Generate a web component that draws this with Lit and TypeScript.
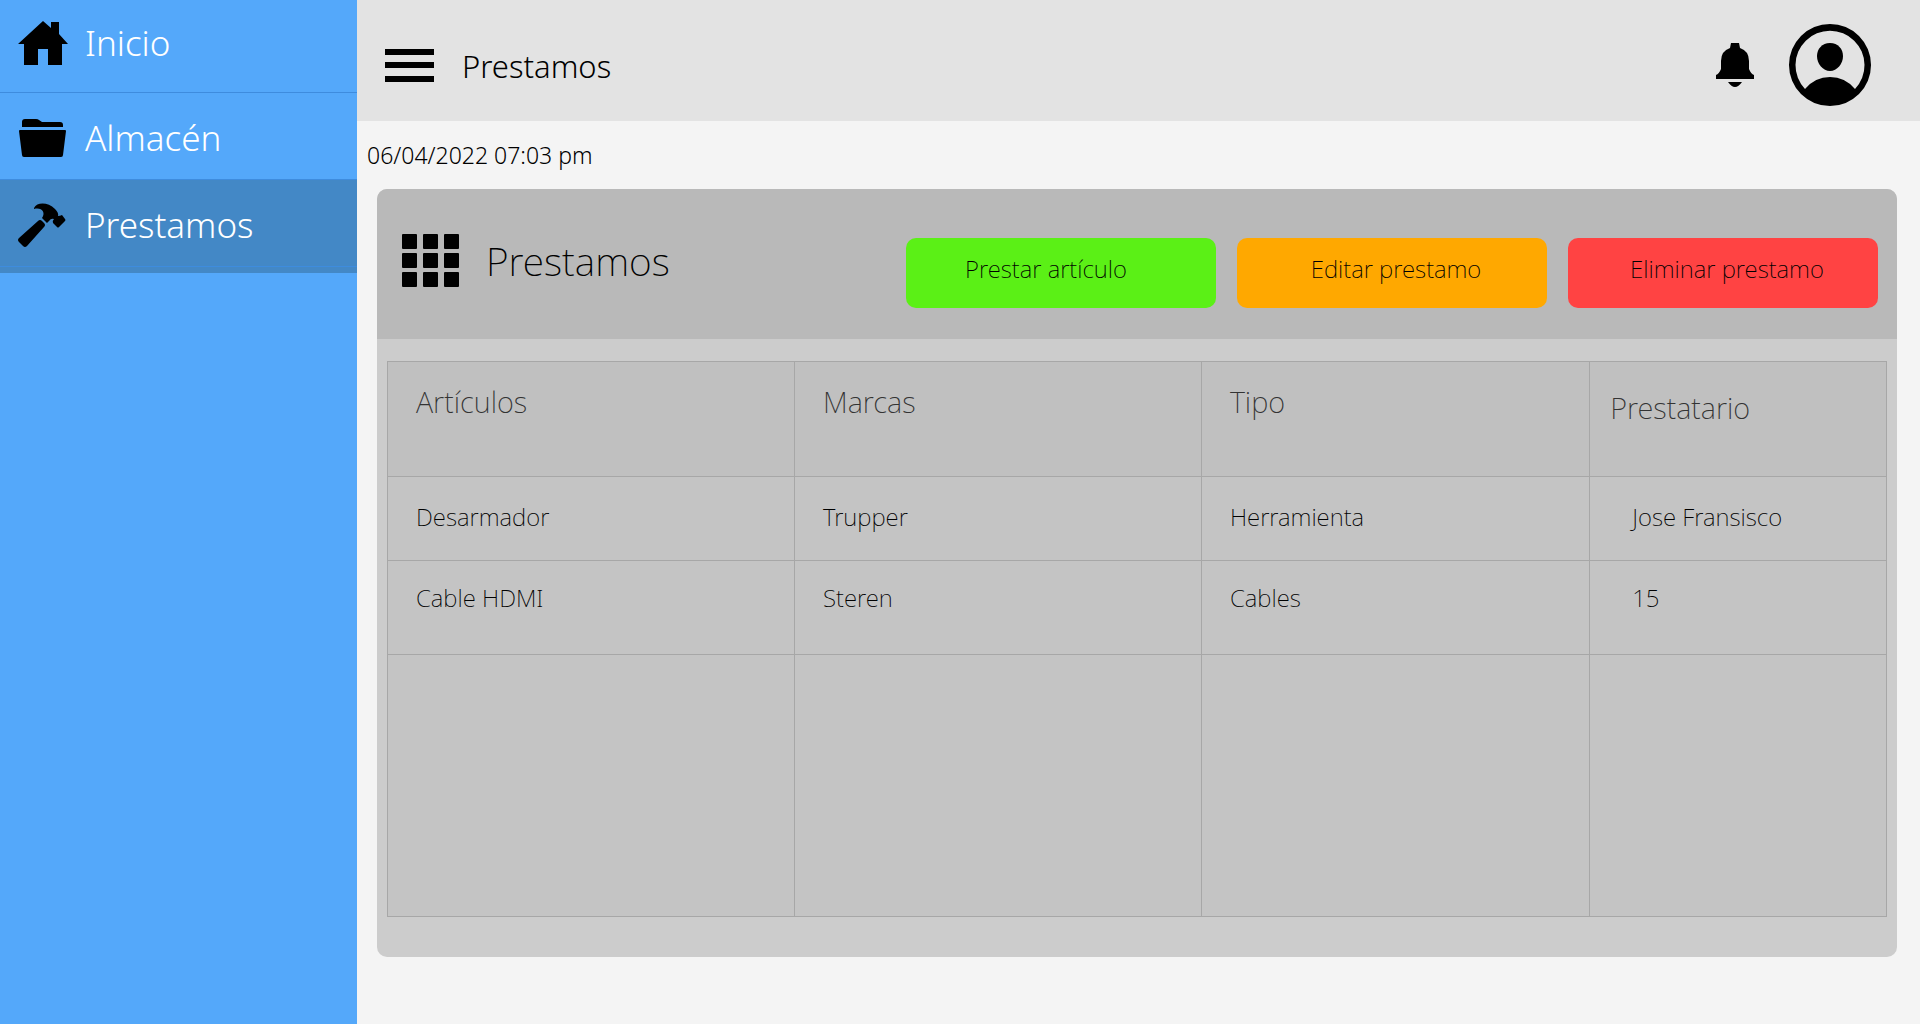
import { LitElement, html, css, svg } from "lit";
import { customElement, state } from "lit/decorators.js";
import { classMap } from "lit/directives/class-map.js";

const homeIcon = svg`<svg class="icon" viewBox="0 0 48 44" width="48" height="44" aria-hidden="true">
  <path d="M24 0 L32 7 V1 H40 V13 L49 23 H43 V44 H29 V28 H19 V44 H5 V23 H-1 Z" /></svg>`;

const folderIcon = svg`<svg class="icon" viewBox="0 0 48 38" width="48" height="38" aria-hidden="true">
  <path d="M3 8 V3 Q3 0 6 0 H17 Q19 0 20 1 L23 3 H41 Q44 3 44 6 V8 Z M1 11 H46 Q47 11 47 12 L44 36 Q44 38 42 38 H5 Q3 38 3 36 L0 12 Q0 11 1 11 Z" /></svg>`;

const hammerIcon = svg`<svg class="icon" viewBox="0 0 48 44" width="48" height="44" aria-hidden="true">
  <path d="M15 5 C18 -1 29 -1 36 6 Q40 10 39 13 Q41 13 43 12 L46 16 Q47 17 46 18 L40 24 Q39 25 38 24 L34 20 Q33 18 35 16 Q32 15 30 18 L28 20 L23 15 C27 10 23 4 15 6 Z" />
  <path d="M19 18 Q21 16 23 18 L25 20 Q27 22 25 24 L8 43 Q6 45 4 43 L0 39 Q-2 37 0 35 Z" /></svg>`;

interface Section {
  id: string;
  label: string;
  icon: unknown;
}

const SECTIONS: Section[] = [
  { id: "inicio", label: "Inicio", icon: homeIcon },
  { id: "almacen", label: "Almacén", icon: folderIcon },
  { id: "prestamos", label: "Prestamos", icon: hammerIcon },
];

const ACTIONS = [
  { kind: "lend", label: "Prestar artículo" },
  { kind: "edit", label: "Editar prestamo" },
  { kind: "remove", label: "Eliminar prestamo" },
];

const COLUMNS = ["Artículos", "Marcas", "Tipo", "Prestatario"];

const LOANS = [
  ["Desarmador", "Trupper", "Herramienta", "Jose Fransisco"],
  ["Cable HDMI", "Steren", "Cables", "15"],
];

@customElement("app-root")
export class AppRoot extends LitElement {
  @state() private current = "prestamos";

  static styles = css`
    :host {
      display: flex;
      min-height: 100vh;
      background: #f4f4f4;
      color: #000;
      font-family: "Noto Sans", "Open Sans", sans-serif;
      font-weight: 200;
    }
    * {
      box-sizing: border-box;
    }
    svg {
      display: block;
      flex: none;
      overflow: visible;
      fill: currentColor;
    }
    button {
      border: 0;
      padding: 0;
      background: none;
      color: inherit;
      font: inherit;
      cursor: pointer;
    }
    h1,
    h2,
    p {
      margin: 0;
      font-weight: inherit;
    }

    .sidebar {
      flex: none;
      width: 357px;
      background: #54a8fa;
    }
    .menu {
      margin: 0;
      padding: 0;
      list-style: none;
    }
    .item.active {
      padding-bottom: 6px;
      background: #4388c6;
    }
    .link {
      display: flex;
      align-items: center;
      gap: 18px;
      padding: 21px 19px 17px;
      border-bottom: 1px solid #3e8cde;
      color: #fff;
      font-size: 35px;
      font-weight: 300;
      line-height: 48px;
      text-decoration: none;
    }
    .item:first-child .link {
      padding-top: 19px;
      padding-bottom: 25px;
    }
    .icon {
      color: #000;
    }

    .content {
      flex: 1;
      min-width: 0;
    }
    .topbar {
      display: flex;
      align-items: center;
      gap: 28px;
      padding: 24px 49px 15px 28px;
      background: #e3e3e3;
    }
    .topbar h1 {
      flex: 1;
      padding-top: 2px;
      font-size: 31px;
      font-weight: 300;
      line-height: 40px;
    }
    .tools {
      display: flex;
      align-items: center;
      gap: 35px;
    }
    .date {
      padding: 18px 10px;
      font-size: 23px;
      font-weight: 300;
      line-height: 32px;
    }

    .card {
      margin: 0 23px 67px 20px;
      border-radius: 10px;
      overflow: hidden;
      background: #ccc;
    }
    .card-head {
      display: flex;
      align-items: center;
      justify-content: space-between;
      gap: 21px;
      padding: 45px 19px 28px 25px;
      background: #b9b9b9;
    }
    .title {
      display: flex;
      align-items: center;
      gap: 27px;
      padding-bottom: 24px;
      font-size: 39px;
      line-height: 46px;
    }
    .actions {
      display: flex;
      gap: 21px;
    }
    .action {
      width: 310px;
      height: 70px;
      padding: 0 0 8px 8px;
      border-radius: 10px;
      font-size: 24px;
      line-height: 32px;
    }
    .lend {
      padding: 0 30px 8px 0;
      background: #5bf016;
    }
    .edit {
      background: #ffa800;
    }
    .remove {
      background: #ff4343;
    }

    .card-body {
      padding: 22px 10px 40px;
    }
    table {
      width: 100%;
      table-layout: fixed;
      border-collapse: collapse;
    }
    th,
    td {
      border: 1px solid #a7a7a7;
      padding: 24px 8px 0 28px;
      font-weight: 200;
      text-align: left;
      vertical-align: top;
    }
    th {
      height: 115px;
      padding-top: 20px;
      background: #c0c0c0;
      color: #333;
      font-size: 29px;
      line-height: 40px;
    }
    th:last-child {
      padding: 26px 8px 0 20px;
    }
    td {
      height: 84px;
      background: #c4c4c4;
      font-size: 24px;
      line-height: 32px;
    }
    td:last-child {
      padding-left: 42px;
    }
    tr:nth-child(2) td {
      height: 94px;
      padding-top: 21px;
    }
    tr.blank td {
      height: 262px;
    }
    .wide {
      width: 27.15%;
    }
    .medium {
      width: 25.9%;
    }
  `;

  private select(event: Event, id: string) {
    event.preventDefault();
    this.current = id;
  }

  private renderSidebar() {
    return html`<nav class="sidebar" aria-label="Principal">
      <ul class="menu">
        ${SECTIONS.map(
          (s) => html`<li class=${classMap({ item: true, active: s.id === this.current })}>
            <a class="link" href="#${s.id}" @click=${(e: Event) => this.select(e, s.id)}>${s.icon}<span>${s.label}</span></a>
          </li>`
        )}
      </ul>
    </nav>`;
  }

  private renderTopbar() {
    return html`<header class="topbar">
      <button aria-label="Menú">
        <svg viewBox="0 0 49 33" width="49" height="33"><path d="M0 0h49v6H0zM0 13h49v6H0zM0 27h49v6H0z" /></svg>
      </button>
      <h1>Prestamos</h1>
      <div class="tools">
        <button aria-label="Notificaciones">
          <svg viewBox="0 0 38 44" width="38" height="44">
            <path d="M15 0 H23 L24 5 Q33 8 33 18 V26 Q35 31 38 32 V36 H0 V32 Q3 31 5 26 V18 Q5 8 14 5 Z M12 39 H26 Q19 49 12 39 Z" />
          </svg>
        </button>
        <button aria-label="Perfil">
          <svg viewBox="0 0 82 82" width="82" height="82">
            <path fill-rule="evenodd" d="M41 0 A41 41 0 1 1 41 82 A41 41 0 1 1 41 0 Z M16 65 Q26 53 41 53 Q56 53 66 65 A34.5 34.5 0 1 0 16 65 Z" />
            <path d="M41 19 C49 19 54 25 54 32 C54 40 48 47 41 47 C34 47 28 40 28 32 C28 25 33 19 41 19 Z" />
          </svg>
        </button>
      </div>
    </header>`;
  }

  private renderTable() {
    return html`<table>
      <colgroup>
        <col class="wide" />
        <col class="wide" />
        <col class="medium" />
        <col />
      </colgroup>
      <thead>
        <tr>${COLUMNS.map((c) => html`<th scope="col">${c}</th>`)}</tr>
      </thead>
      <tbody>
        ${LOANS.map((row) => html`<tr>${row.map((cell) => html`<td>${cell}</td>`)}</tr>`)}
        <tr class="blank">${COLUMNS.map(() => html`<td></td>`)}</tr>
      </tbody>
    </table>`;
  }

  render() {
    return html`${this.renderSidebar()}
      <main class="content">
        ${this.renderTopbar()}
        <p class="date">06/04/2022 07:03 pm</p>
        <section class="card">
          <div class="card-head">
            <h2 class="title">
              <svg viewBox="0 0 57 53" width="57" height="53" aria-hidden="true">
                ${[0, 19, 38].map((y) =>
                  [0, 21, 42].map((x) => svg`<rect x=${x} y=${y} width="15" height="15" rx="1" />`)
                )}
              </svg>
              <span>Prestamos</span>
            </h2>
            <div class="actions">
              ${ACTIONS.map((a) => html`<button class="action ${a.kind}">${a.label}</button>`)}
            </div>
          </div>
          <div class="card-body">${this.renderTable()}</div>
        </section>
      </main>`;
  }
}
